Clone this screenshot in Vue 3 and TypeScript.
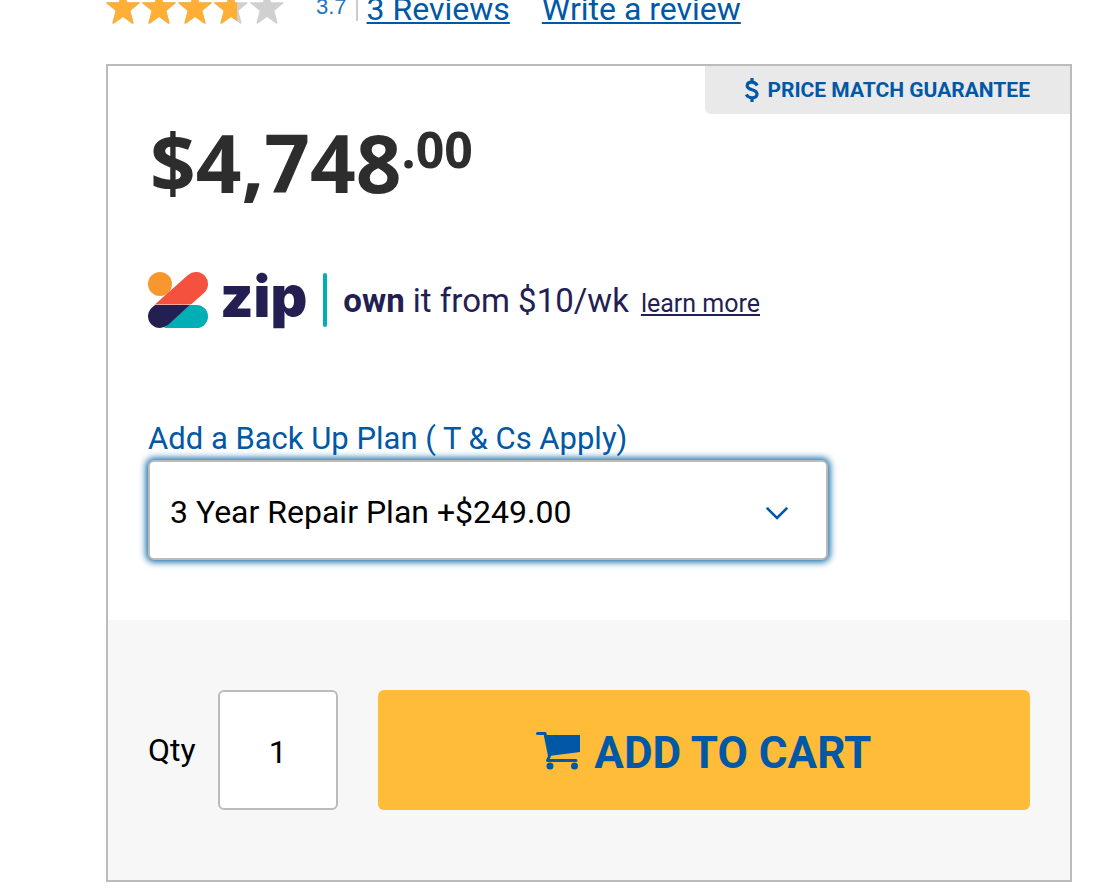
<script setup lang="ts">
import { ref } from 'vue'

const rating = 3.7
const stars = [1, 1, 1, 0.68, 0]
const plans = ['3 Year Repair Plan +$249.00']
const plan = ref(plans[0])
const qty = ref('1')
</script>

<template>
  <main class="page">
    <div class="reviews">
      <div class="stars" role="img" :aria-label="`${rating} out of 5`">
        <svg v-for="(fill, i) in stars" :key="i" viewBox="0 0 34 34" width="34" height="34">
          <defs>
            <clipPath :id="`fill-${i}`"><rect x="0" y="0" :width="34 * fill" height="34" /></clipPath>
          </defs>
          <path class="star-off" d="M17 0.5 L21.2 12.2 H33.2 Q34.6 12.8 33 13.8 L24.4 20.8 L27.500 32.500 Q27.6 34 26 33.500 L17 27 L8 33.500 Q6.4 34 6.500 32.500 L9.6 20.8 L1 13.8 Q-0.6 12.8 0.8 12.2 H12.8 Z" />
          <path class="star-on" :clip-path="`url(#fill-${i})`" d="M17 0.5 L21.2 12.2 H33.2 Q34.6 12.8 33 13.8 L24.4 20.8 L27.500 32.500 Q27.6 34 26 33.500 L17 27 L8 33.500 Q6.4 34 6.500 32.500 L9.6 20.8 L1 13.8 Q-0.6 12.8 0.8 12.2 H12.8 Z" />
        </svg>
      </div>
      <span class="score">{{ rating }}</span>
      <a class="review-link" href="#reviews">3 Reviews</a>
      <a class="review-link" href="#write">Write a review</a>
    </div>

    <section class="card">
      <div class="guarantee">
        <svg viewBox="0 0 14 24" width="14" height="24" aria-hidden="true">
          <path d="M7 0V4M7 20V24M12.300 7.500C11 5.500 9.500 4.200 7 4.200C4.200 4.200 2.200 5.500 2.200 7.800C2.200 13 12 10.500 12 16C12 18.500 9.800 19.800 7 19.800C4.200 19.800 2.500 18.500 1.200 16.500" fill="none" stroke="currentColor" stroke-width="3.200" />
        </svg>
        <span>PRICE MATCH GUARANTEE</span>
      </div>

      <div class="details">
        <p class="price"><span>$4,748</span><span class="cents">.00</span></p>

        <div class="zip">
          <svg viewBox="0 0 60 56" width="60" height="56" aria-hidden="true">
            <defs>
              <clipPath id="upper"><rect width="60" height="32.500" /></clipPath>
            </defs>
            <circle cx="12" cy="12" r="12" fill="#f9972f" />
            <path d="M12 44L48 12" stroke="#f4513e" stroke-width="24" stroke-linecap="round" clip-path="url(#upper)" />
            <path d="M42 33H48.500A11.500 11.500 0 0 1 48.500 56H16Z" fill="#00aeb6" />
            <path d="M7 33H42L20 53Q16 56 12 56A12 12 0 0 1 0 44Q0 38 7 33Z" fill="#241f52" />
          </svg>
          <span class="zip-word">zip</span>
          <span class="zip-bar"></span>
          <p class="zip-offer">
            <span><b>own</b> it from $10/wk</span>
            <a class="zip-link" href="#zip">learn more</a>
          </p>
        </div>

        <label class="plan-label" for="plan">Add a Back Up Plan ( T &amp; Cs Apply)</label>
        <div class="plan">
          <select id="plan" v-model="plan">
            <option v-for="p in plans" :key="p">{{ p }}</option>
          </select>
          <svg class="chevron" viewBox="0 0 22 14" width="22" height="14" aria-hidden="true">
            <path d="M1.500 1.500L11 11L20.500 1.500" fill="none" stroke="currentColor" stroke-width="2.500" stroke-linecap="round" />
          </svg>
        </div>
      </div>

      <form class="buy" @submit.prevent>
        <label for="qty">Qty</label>
        <input id="qty" v-model="qty" type="text" inputmode="numeric" />
        <button type="submit">
          <svg viewBox="0 0 44 40" width="44" height="40" aria-hidden="true">
            <path d="M1.500 3.500H9L13.500 26L11.500 30.500H40" fill="none" stroke="currentColor" stroke-width="3" stroke-linecap="round" stroke-linejoin="round" />
            <path d="M9 5H44V22L13 26Z" fill="currentColor" />
            <circle cx="14" cy="36" r="3.500" fill="currentColor" />
            <circle cx="38.500" cy="36" r="3.500" fill="currentColor" />
          </svg>
          <span>ADD TO CART</span>
        </button>
      </form>
    </section>
  </main>
</template>

<style>
body {
  margin: 0;
  background: #fff;
}
</style>

<style scoped>
.page {
  padding: 0 34px 6px 106px;
  font-family: Roboto, "Liberation Sans", sans-serif;
  font-size: 32px;
  color: #000;
}

.reviews {
  display: flex;
  align-items: flex-end;
  height: 24px;
  overflow: hidden;
  color: #0058a6;
}

.stars {
  display: flex;
  gap: 2px;
}

.stars svg {
  display: block;
}

.star-off {
  fill: #d1d0d0;
}

.star-on {
  fill: #ffaf36;
}

.score {
  margin-left: 32px;
  padding-right: 9px;
  border-right: 2px solid #ccc;
  margin-bottom: 3px;
  font: 22px/28px "Liberation Sans", Arial, sans-serif;
  color: #1b76bd;
}

.review-link {
  margin-left: 9px;
  font-size: 32px;
  line-height: 30px;
  color: #0058a6;
  text-decoration-thickness: 2px;
  text-underline-offset: 2px;
}

.review-link + .review-link {
  margin-left: 32px;
}

.card {
  margin-top: 40px;
  border: 2px solid #bbb;
}

.guarantee {
  display: flex;
  align-items: center;
  gap: 8px;
  width: fit-content;
  height: 48px;
  box-sizing: border-box;
  margin-left: auto;
  padding: 0 40px;
  border-radius: 0 0 0 6px;
  background: #e9e9e9;
  color: #0058a6;
  font-size: 21px;
  font-weight: 700;
}

.details {
  padding: 0 40px 60px;
}

.price {
  display: flex;
  align-items: flex-start;
  margin: 0 0 0 2px;
  height: 158px;
  font-family: "Noto Sans", sans-serif;
  font-size: 80px;
  line-height: 96px;
  font-weight: 700;
  color: #2d2d2d;
}

.cents {
  font-size: 50px;
  line-height: 70px;
}

.zip {
  display: flex;
  align-items: center;
  height: 56px;
  color: #241f52;
}

.zip-word {
  margin-left: 12px;
  padding-bottom: 6px;
  font-family: Inter, sans-serif;
  font-size: 57px;
  line-height: 56px;
  font-weight: 900;
}

.zip-bar {
  width: 4px;
  height: 54px;
  margin: 0 16px;
  border-radius: 2px;
  background: #00aeb6;
}

.zip-offer {
  display: flex;
  align-items: baseline;
  gap: 12px;
  margin: 0;
  font-size: 33px;
  white-space: nowrap;
}

.zip-link {
  font-size: 25px;
  color: #241f52;
  text-decoration-thickness: 2px;
  text-underline-offset: 2px;
}

.plan-label {
  display: block;
  margin-top: 90px;
  font-size: 31px;
  line-height: 42px;
  color: #0058a6;
}

.plan {
  position: relative;
  max-width: 680px;
}

select {
  display: block;
  width: 100%;
  height: 100px;
  padding: 4px 60px 0 20px;
  border: 2px solid #bbb;
  border-radius: 6px;
  outline: none;
  appearance: none;
  background: #fff;
  box-shadow: 0 0 7px 2px #0c68a5;
  font: inherit;
  color: #000;
}

.chevron {
  position: absolute;
  right: 40px;
  top: 47px;
  color: #0058a6;
  pointer-events: none;
}

.buy {
  display: flex;
  align-items: center;
  padding: 70px 40px;
  background: #f7f7f7;
}

#qty {
  width: 120px;
  height: 120px;
  box-sizing: border-box;
  margin: 0 40px 0 22px;
  padding: 4px 0 0;
  border: 2px solid #bbb;
  border-radius: 6px;
  background: #fff;
  font: inherit;
  text-align: center;
}

button {
  display: flex;
  flex: 1;
  align-items: center;
  justify-content: center;
  gap: 14px;
  height: 120px;
  padding: 0;
  border: 0;
  border-radius: 6px;
  background: #ffbc38;
  color: #0058a6;
  font: inherit;
  font-size: 44px;
  line-height: 52px;
  font-weight: 700;
}

button span {
  padding-top: 6px;
}
</style>
